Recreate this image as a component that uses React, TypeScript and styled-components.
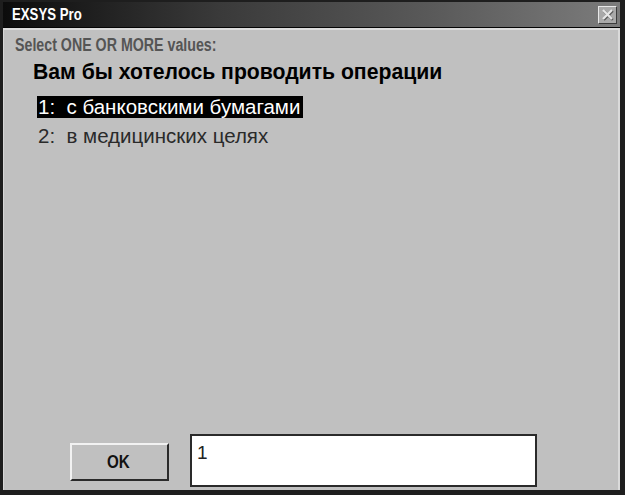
import React, { useState } from "react";
import styled, { createGlobalStyle } from "styled-components";

const GlobalStyle = createGlobalStyle`
  html, body {
    margin: 0;
    padding: 0;
    background: #1a1a1a;
  }
  #root {
    width: 625px;
    height: 495px;
  }
`;

// the original uses a narrow bold face; squeeze Liberation Sans to match
const Narrow = styled.span<{ $scale: number }>`
  display: inline-block;
  transform: scaleX(${(p) => p.$scale});
  transform-origin: left center;
  white-space: nowrap;
`;

const Window = styled.div`
  box-sizing: border-box;
  width: 625px;
  height: 495px;
  display: flex;
  flex-direction: column;
  background: #1e1e1e;
  padding: 2px 5px 5px 3px;
  font-family: "Liberation Sans", Arial, sans-serif;
`;

const TitleBar = styled.div`
  height: 25px;
  display: flex;
  align-items: center;
  justify-content: space-between;
  padding: 0 3px 0 9px;
  background: linear-gradient(to right, #0c0c0c 0%, #3a3a3a 35%, #5a5a5a 70%, #7c7c7c 100%);
  border-bottom: 1px solid #050505;
`;

const Title = styled.span`
  color: #ffffff;
  font-weight: bold;
  font-size: 16.5px;
`;

const CloseButton = styled.button`
  box-sizing: border-box;
  width: 19px;
  height: 18px;
  padding: 0;
  margin-top: 1px;
  display: flex;
  align-items: center;
  justify-content: center;
  background: #a9a9a9;
  border: 1px solid;
  border-color: #e8e8e8 #3c3c3c #3c3c3c #e8e8e8;
  cursor: default;
`;

const Body = styled.div`
  flex: 1;
  display: flex;
  flex-direction: column;
  background: #c0c0c0;
  border-top: 2px solid #dcdcdc;
  border-left: 1px solid #d6d6d6;
  border-right: 2px solid #dadada;
  padding: 5px 0 0 11px;
  min-height: 0;
`;

const Prompt = styled.div`
  color: #555555;
  font-weight: bold;
  font-size: 18px;
  line-height: 21px;
`;

const Question = styled.div`
  margin: 4px 0 0 18px;
  color: #000000;
  font-weight: bold;
  font-size: 21.2px;
  line-height: 24px;
`;

const OptionList = styled.ul`
  list-style: none;
  margin: 12px 0 0 22px;
  padding: 0;
  display: flex;
  flex-direction: column;
  gap: 7px;
`;

const Option = styled.li<{ $selected: boolean }>`
  align-self: flex-start;
  padding: 0 3px 0 1px;
  height: 22px;
  line-height: 22px;
  font-size: 20.5px;
  white-space: pre;
  cursor: default;
  color: ${(p) => (p.$selected ? "#ffffff" : "#2a2a2a")};
  background: ${(p) => (p.$selected ? "#000000" : "transparent")};
`;

const Footer = styled.div`
  margin-top: auto;
  display: flex;
  align-items: center;
  gap: 21px;
  padding: 0 0 3px 55px;
`;

const OkButton = styled.button`
  box-sizing: border-box;
  width: 99px;
  height: 38px;
  padding: 0 0 0 2px;
  display: flex;
  align-items: center;
  justify-content: center;
  background: #c0c0c0;
  border: 2px solid;
  border-color: #f2f2f2 #2a2a2a #2a2a2a #f2f2f2;
  font-family: "Liberation Sans", Arial, sans-serif;
  font-weight: bold;
  font-size: 18.5px;
  color: #111111;
  margin-top: 2px;
  cursor: default;
`;

const AnswerBox = styled.input`
  box-sizing: border-box;
  width: 347px;
  height: 53px;
  padding: 8px 5px 23px;
  border: 2px solid #2a2a2a;
  background: #ffffff;
  font-family: "Liberation Sans", Arial, sans-serif;
  font-size: 19px;
  line-height: 18px;
  color: #222222;
  outline: none;
`;

const options = ["с банковскими бумагами", "в медицинских целях"];

const App: React.FC = () => {
  const [selected, setSelected] = useState<number[]>([0]);
  const [answer, setAnswer] = useState("1");

  const toggle = (index: number) => {
    const next = selected.includes(index)
      ? selected.filter((i) => i !== index)
      : [...selected, index].sort();
    setSelected(next);
    setAnswer(next.map((i) => i + 1).join(" "));
  };

  return (
    <>
      <GlobalStyle />
      <Window>
        <TitleBar>
          <Title>
            <Narrow $scale={0.8}>EXSYS Pro</Narrow>
          </Title>
          <CloseButton type="button" aria-label="Close">
            <svg width="13" height="12" viewBox="0 0 13 12">
              <path d="M2 1 L11 10 M11 1 L2 10" stroke="#5a5a5a" strokeWidth="2.4" transform="translate(0.8 0.8)" />
              <path d="M2 1 L11 10 M11 1 L2 10" stroke="#e6e6e6" strokeWidth="2.2" />
            </svg>
          </CloseButton>
        </TitleBar>
        <Body>
          <Prompt>
            <Narrow $scale={0.79}>Select ONE OR MORE values:</Narrow>
          </Prompt>
          <Question>Вам бы хотелось проводить операции</Question>
          <OptionList>
            {options.map((text, i) => (
              <Option key={text} $selected={selected.includes(i)} onClick={() => toggle(i)}>
                {`${i + 1}:  ${text}`}
              </Option>
            ))}
          </OptionList>
          <Footer>
            <OkButton type="button">
              <Narrow $scale={0.82}>OK</Narrow>
            </OkButton>
            <AnswerBox value={answer} onChange={(e) => setAnswer(e.target.value)} />
          </Footer>
        </Body>
      </Window>
    </>
  );
};

export default App;
